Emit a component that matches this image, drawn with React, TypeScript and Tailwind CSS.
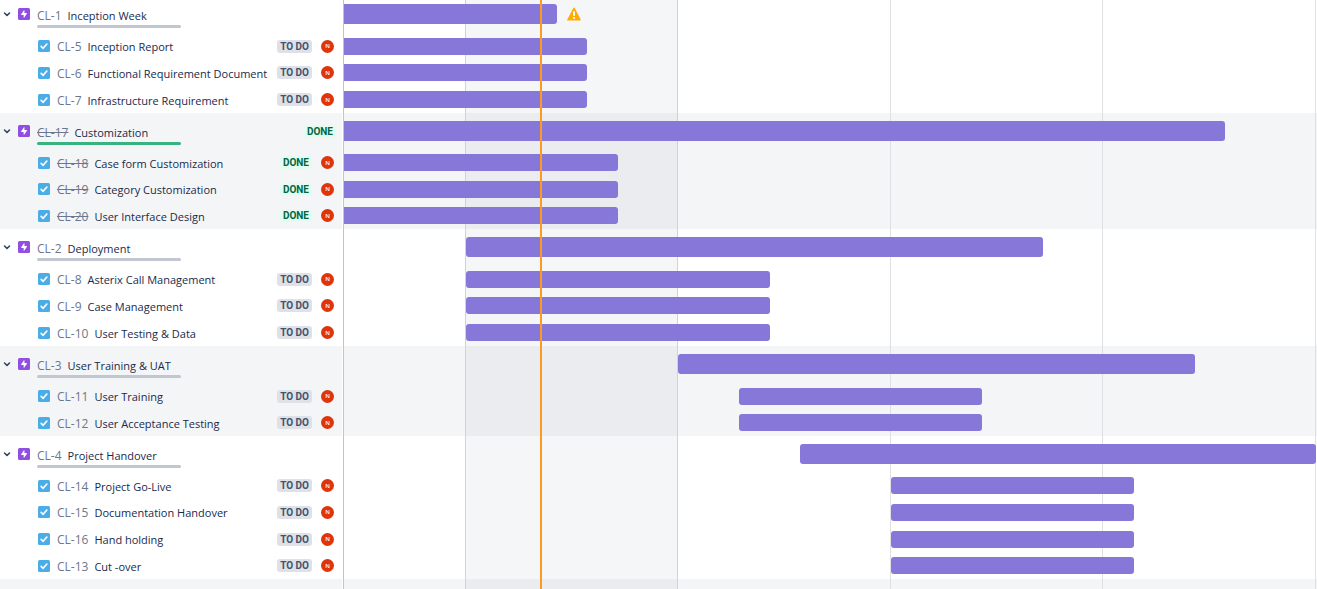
import React, { useState } from 'react';

type Span = { start: number; end: number };
type Task = Span & { id: string; title: string };
type Epic = Task & { done?: boolean; late?: boolean; size: string; tasks: Task[] };

/* Timeline positions are measured in units of this scale. */
const SCALE = 973;
const TODAY = 196;

const epics: Epic[] = [
  {
    id: 'CL-1', title: 'Inception Week', start: 0, end: 213, late: true, size: '-mt-1 h-[117px]',
    tasks: [
      { id: 'CL-5', title: 'Inception Report', start: 0, end: 243 },
      { id: 'CL-6', title: 'Functional Requirement Document', start: 0, end: 243 },
      { id: 'CL-7', title: 'Infrastructure Requirement', start: 0, end: 243 },
    ],
  },
  {
    id: 'CL-17', title: 'Customization', start: 0, end: 881, done: true, size: 'h-[116px]',
    tasks: [
      { id: 'CL-18', title: 'Case form Customization', start: 0, end: 274 },
      { id: 'CL-19', title: 'Category Customization', start: 0, end: 274 },
      { id: 'CL-20', title: 'User Interface Design', start: 0, end: 274 },
    ],
  },
  {
    id: 'CL-2', title: 'Deployment', start: 122, end: 699, size: 'h-[117px]',
    tasks: [
      { id: 'CL-8', title: 'Asterix Call Management', start: 122, end: 426 },
      { id: 'CL-9', title: 'Case Management', start: 122, end: 426 },
      { id: 'CL-10', title: 'User Testing & Data', start: 122, end: 426 },
    ],
  },
  {
    id: 'CL-3', title: 'User Training & UAT', start: 334, end: 851, size: 'h-[90px]',
    tasks: [
      { id: 'CL-11', title: 'User Training', start: 395, end: 638 },
      { id: 'CL-12', title: 'User Acceptance Testing', start: 395, end: 638 },
    ],
  },
  {
    id: 'CL-4', title: 'Project Handover', start: 456, end: 972, size: 'h-[143px]',
    tasks: [
      { id: 'CL-14', title: 'Project Go-Live', start: 547, end: 790 },
      { id: 'CL-15', title: 'Documentation Handover', start: 547, end: 790 },
      { id: 'CL-16', title: 'Hand holding', start: 547, end: 790 },
      { id: 'CL-13', title: 'Cut -over', start: 547, end: 790 },
    ],
  },
];

const months = [
  { width: 122, line: 'border-[#d0d1da]', fill: '' },
  { width: 212, line: 'border-[#d0d1da]', fill: 'bg-[#091e42]/4' },
  { width: 213, line: 'border-[#dfe0e4]', fill: '' },
  { width: 212, line: 'border-[#dfe0e4]', fill: '' },
  { width: 213, line: 'border-[#dfe0e4]', fill: '' },
];

const pct = (n: number) => `${(n / SCALE) * 100}%`;

function EpicIcon() {
  return (
    <svg viewBox="0 0 16 16" className="size-3 shrink-0" aria-hidden="true">
      <rect width="16" height="16" rx="2" fill="#904ee2" />
      <path d="M12 7.1a.5.5 0 0 0-.5-.5H8.6V3.4c0-.5-.6-.6-.9-.2L4.2 8.4c-.3.4 0 .9.4.9h2.9v3.3c0 .5.6.6.9.2l3.5-5.3z" fill="#fff" />
    </svg>
  );
}

function TaskIcon() {
  return (
    <svg viewBox="0 0 16 16" className="size-3 shrink-0" aria-hidden="true">
      <rect width="16" height="16" rx="2" fill="#4bade8" />
      <path d="M4.2 8.4l2.6 2.6 5-5.6" fill="none" stroke="#fff" strokeWidth="2.2" strokeLinecap="round" />
    </svg>
  );
}

function WarningIcon() {
  return (
    <svg viewBox="0 0 14 14" className="ml-2.5 size-3.5 shrink-0" role="img" aria-label="Overdue">
      <path d="M6.3.9a.8.8 0 0 1 1.4 0l6 11.6a.7.7 0 0 1-.7 1.1H1a.7.7 0 0 1-.7-1.1z" fill="#ffab00" />
      <rect x="6" y="4" width="2" height="5" rx="1" fill="#fff" />
      <circle cx="7" cy="11" r="1.1" fill="#fff" />
    </svg>
  );
}

function Status({ done }: { done?: boolean }) {
  return (
    <span
      className={`rounded-[3px] px-[3px] font-['Roboto',sans-serif] text-[10px] leading-[13px] font-bold ${
        done ? 'bg-[#e3fcef] text-[#006644]' : 'bg-[#dfe1e6] text-[#42526e]'
      }`}
    >
      {done ? 'DONE' : 'TO DO'}
    </span>
  );
}

function Label({ id, title, done }: { id: string; title: string; done?: boolean }) {
  return (
    <span className="flex min-w-0 flex-1 items-baseline gap-1.5 text-xs leading-4 whitespace-nowrap">
      <a href={`#${id}`} className={`text-[#6b778c] ${done ? 'line-through' : ''}`}>{id}</a>
      <span className="text-[11px] leading-4 text-[#172b4d]">{title}</span>
    </span>
  );
}

function Bar({ span, epic, late }: { span: Span; epic?: boolean; late?: boolean }) {
  return (
    <div className={`flex items-center ${epic ? 'grow-11' : 'grow-8'} basis-0`}>
      <div
        className={`shrink-0 bg-[#8777d9] ${epic ? 'h-5' : 'h-[17px]'} ${span.start === 0 ? 'rounded-r-[3px]' : 'rounded-[3px]'}`}
        style={{ marginLeft: pct(span.start), width: pct(span.end - span.start) }}
      />
      {late && <WarningIcon />}
    </div>
  );
}

export default function App() {
  const [closed, setClosed] = useState<string[]>([]);
  const isOpen = (id: string) => !closed.includes(id);
  const toggle = (id: string) =>
    setClosed((c) => (c.includes(id) ? c.filter((x) => x !== id) : [...c, id]));
  const shade = (i: number) => (i % 2 ? 'bg-[#f4f5f7]' : 'bg-white');
  const size = (e: Epic) => (isOpen(e.id) ? e.size : 'h-[37px]');

  return (
    <main className="flex min-h-screen overflow-hidden bg-white font-['Open_Sans','Noto_Sans',sans-serif]">
      <aside className="flex w-[344px] shrink-0 flex-col border-r border-[#c1c3ce] pr-px">
        {epics.map((epic, i) => (
          <section key={epic.id} className={`flex flex-col ${size(epic)} ${shade(i)}`}>
            <div className="flex grow-11 basis-0 items-center pr-1.5 pl-0.5">
              <button
                type="button"
                aria-expanded={isOpen(epic.id)}
                aria-label={`Toggle ${epic.title}`}
                onClick={() => toggle(epic.id)}
                className="mr-1.5 flex size-2.5 items-center justify-center text-[#344563]"
              >
                <svg viewBox="0 0 10 10" className="size-2.5" aria-hidden="true">
                  <path d="M2.5 4L5 6.5 7.5 4" fill="none" stroke="currentColor" strokeWidth="1.6" strokeLinecap="round" strokeLinejoin="round" />
                </svg>
              </button>
              <EpicIcon />
              <div className="ml-[7px] flex flex-1 flex-col gap-px pt-2">
                <Label id={epic.id} title={epic.title} done={epic.done} />
                <div className={`h-[3px] w-36 rounded-xs ${epic.done ? 'bg-[#36b37e]' : 'bg-[#c1c7d0]'}`} />
              </div>
              {epic.done && <Status done />}
            </div>
            {isOpen(epic.id) &&
              epic.tasks.map((task) => (
                <div key={task.id} className="flex grow-8 basis-0 items-center pr-2 pl-[38px]">
                  <TaskIcon />
                  <div className="ml-[7px] flex min-w-0 flex-1 pt-0.5">
                    <Label id={task.id} title={task.title} done={epic.done} />
                  </div>
                  <Status done={epic.done} />
                  <span className="ml-[9px] flex size-[13px] items-center justify-center rounded-full bg-[#de350b] text-[6px] leading-none font-semibold text-white">
                    N
                  </span>
                </div>
              ))}
          </section>
        ))}
        <div className="grow bg-[#f4f5f7]" />
      </aside>

      <div className="relative flex flex-1 flex-col">
        {epics.map((epic, i) => (
          <section key={epic.id} className={`flex flex-col ${size(epic)} ${shade(i)}`}>
            <div className="relative z-10 flex flex-1 flex-col">
              <Bar span={epic} epic late={epic.late} />
              {isOpen(epic.id) && epic.tasks.map((task) => <Bar key={task.id} span={task} />)}
            </div>
          </section>
        ))}
        <div className="grow bg-[#f4f5f7]" />
        <div className="absolute inset-0 flex" aria-hidden="true">
          {months.map((m, i) => (
            <div key={i} className={`border-r ${m.line} ${m.fill}`} style={{ width: pct(m.width) }} />
          ))}
        </div>
        <div className="absolute inset-y-0 z-20 w-0.5 bg-[#ff991f]" style={{ left: pct(TODAY) }} />
      </div>
    </main>
  );
}
